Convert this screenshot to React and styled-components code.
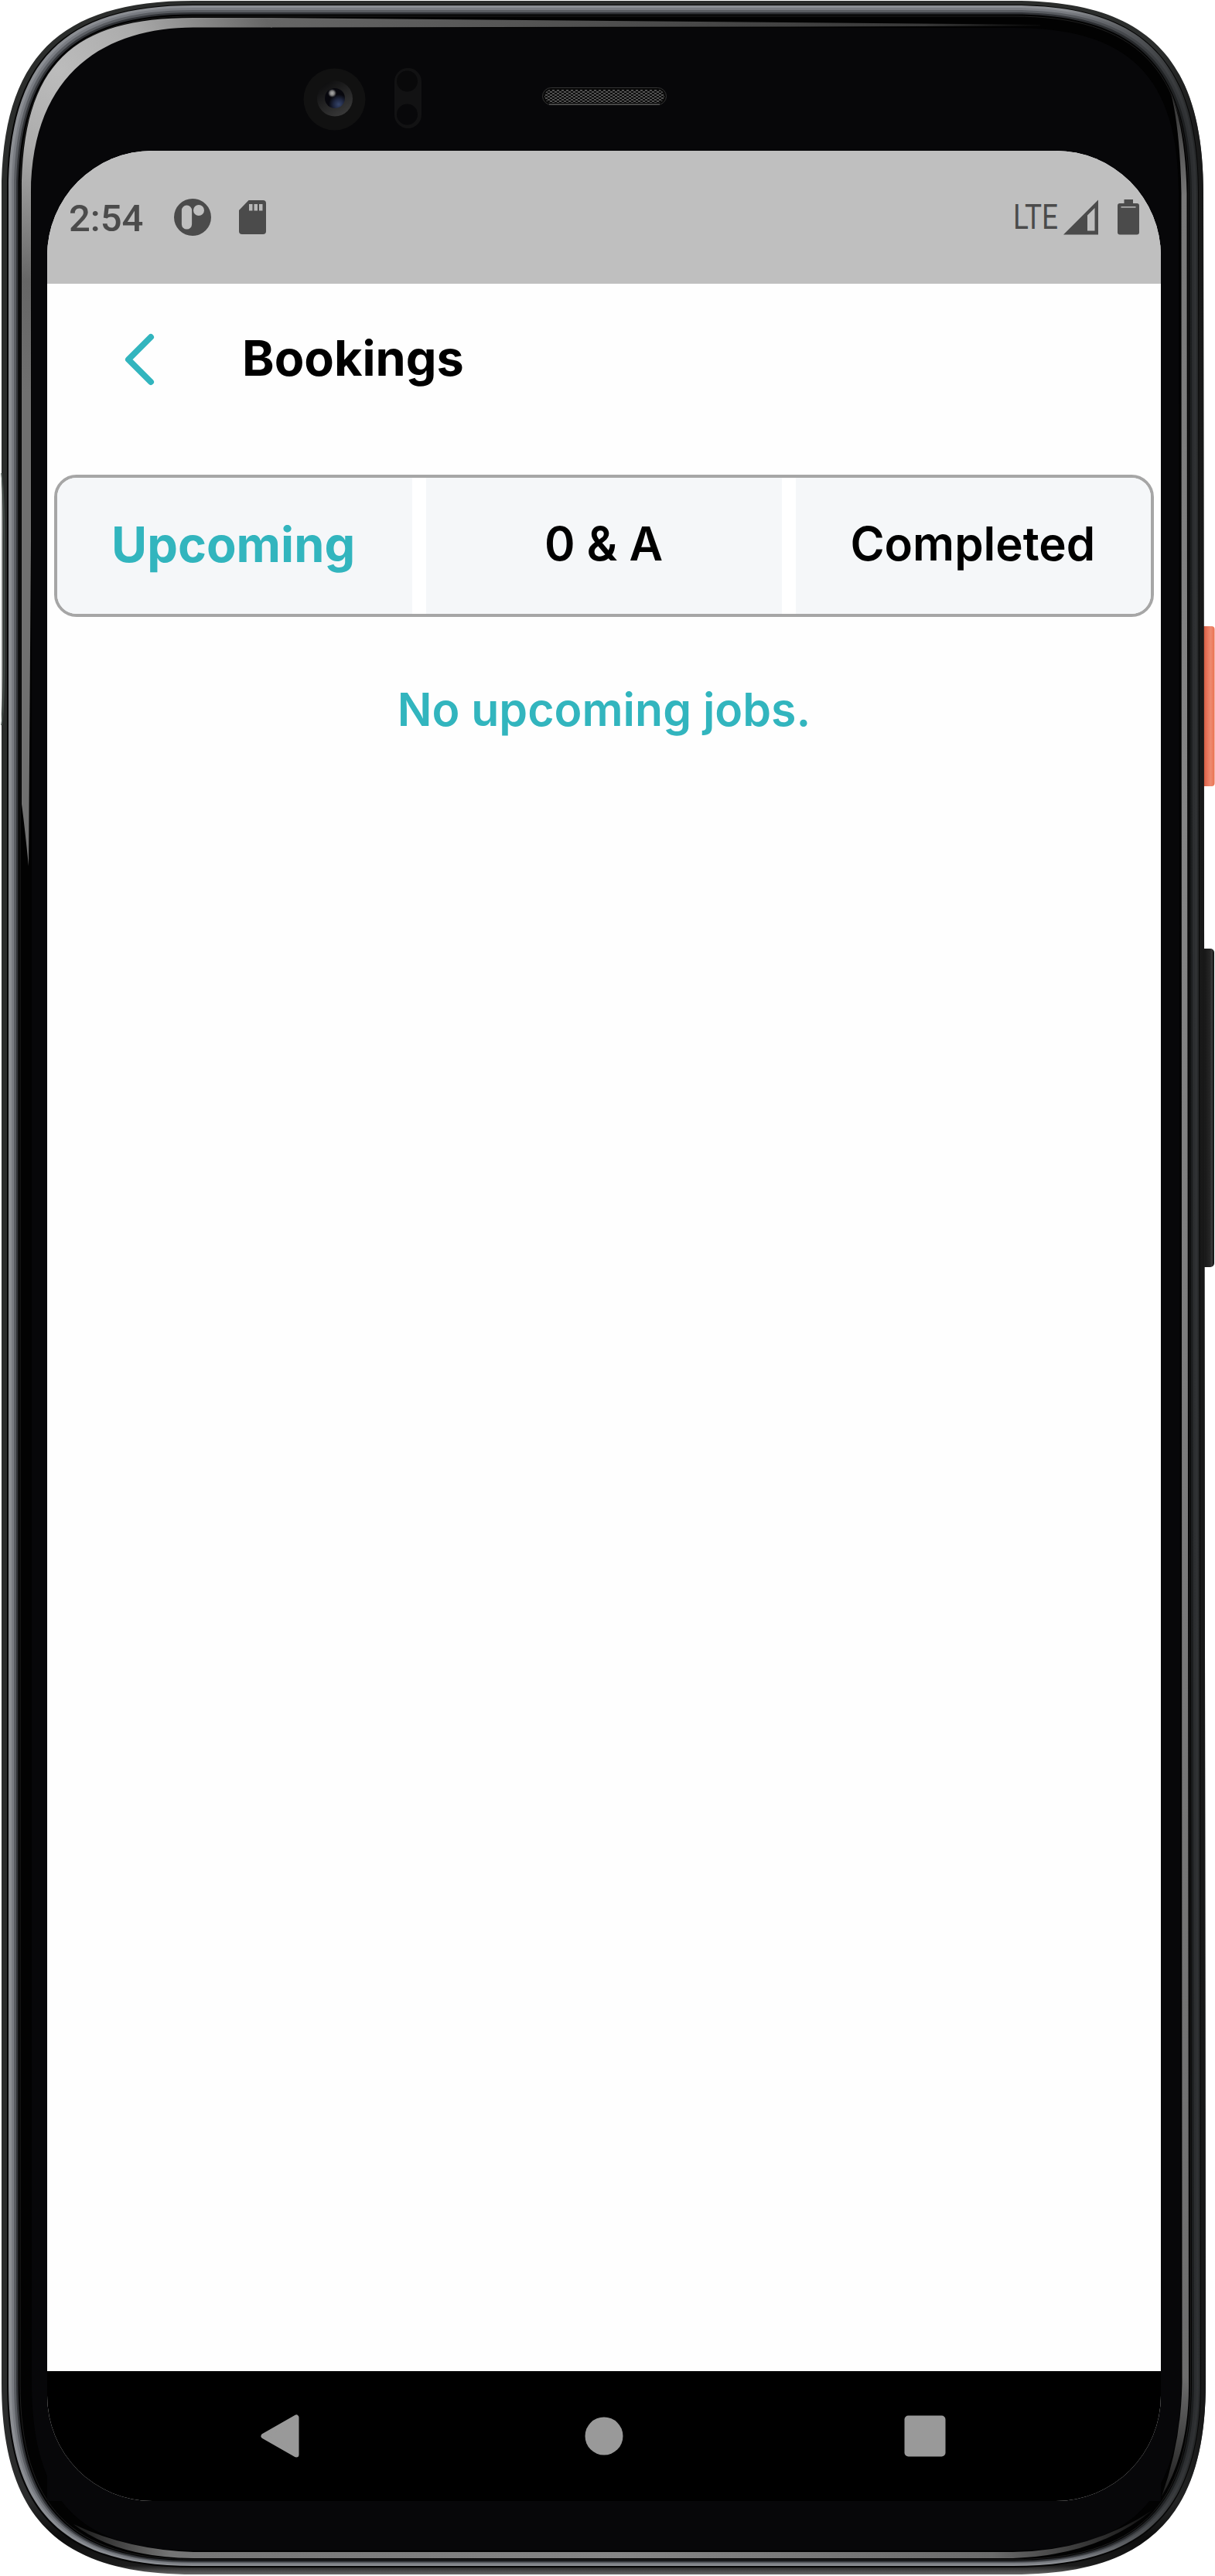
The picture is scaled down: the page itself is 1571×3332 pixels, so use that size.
import React from "react";
import styled, { createGlobalStyle, css } from "styled-components";

const GlobalStyle = createGlobalStyle`
  html, body { margin: 0; padding: 0; background: #fff; }
  *, *::before, *::after { box-sizing: border-box; }
`;

const teal = "#32b5be";
const ink = "#4b4b4b";

const Device = styled.div`
  position: relative;
  width: 1571px;
  height: 3332px;
  padding: 195px 70px 97px 61px;
  overflow: hidden;
`;

const Bezel = styled.svg`
  position: absolute;
  inset: 0;
  display: block;
`;

const Screen = styled.main`
  position: relative;
  display: flex;
  flex-direction: column;
  width: 1440px;
  height: 3040px;
  border-radius: 136px;
  background: #fefefe;
  overflow: hidden;
`;

const StatusBar = styled.header`
  display: flex;
  justify-content: space-between;
  height: 172px;
  padding: 60px 28px 60px 28px;
  background: #bfbfbf;
  color: ${ink};
  font-family: Roboto, sans-serif;
`;

const StatusGroup = styled.div`
  display: flex;
  align-items: center;
  height: 52px;
`;

const Clock = styled.time`
  width: 135px;
  font-size: 49px;
  line-height: 52px;
  font-weight: 500;
  padding-top: 4px;
`;

const Network = styled.span`
  width: 65px;
  padding-top: 1px;
  font-size: 43.5px;
  line-height: 52px;
  white-space: nowrap;
  transform: scaleX(0.85);
  transform-origin: left center;
`;

const Glyph = styled.svg`
  display: block;
  flex: none;
  margin-left: ${(p) => p.$gap || 0}px;
`;

const AppBar = styled.div`
  display: flex;
  align-items: center;
  height: 196px;
  padding-left: 96px;
`;

const BackButton = styled.button`
  display: flex;
  border: 0;
  padding: 0;
  background: none;
`;

const Title = styled.h1`
  margin: 0 0 4px 110px;
  font: 700 63px/76px Inter, sans-serif;
  color: #000;
`;

const Tabs = styled.nav`
  display: grid;
  grid-template-columns: repeat(3, 1fr);
  gap: 18px;
  height: 184px;
  margin: 51px 9px 0;
  border: 4px solid #a6a6a6;
  border-radius: 29px;
  background: #fff;
  overflow: hidden;
`;

const Tab = styled.button`
  border: 0;
  padding: 0 1px 6px 0;
  background: #f5f7f9;
  color: #000;
  font: 600 60px/72px Inter, sans-serif;
  ${(p) =>
    p.$active &&
    css`
      color: ${teal};
      font-weight: 700;
      font-size: 63px;
      padding: 0 4px 4px 0;
    `}
`;

const Empty = styled.p`
  flex: 1;
  margin: 84px 0 0;
  text-align: center;
  color: ${teal};
  font: 600 59px/72px Inter, sans-serif;
`;

const NavBar = styled.footer`
  display: flex;
  align-items: center;
  height: 168px;
  padding-left: 275px;
  background: #000;
`;

/* Closed outline of the body, inset from each side. */
const ring = (l, t, r, b) => {
  const k = 0.297;
  const cl = l + k * (250 - l);
  const ct = t + k * (250 - t);
  const cr = r - k * (r - 1310);
  const cb = b - k * (b - 3082);
  return `M${l} 250C${l} ${ct} ${cl} ${t} 250 ${t}H1310C${cr} ${t} ${r} ${ct} ${r} 250L${r + 3} 3082C${r + 3} ${cb} ${cr} ${b} 1310 ${b}H250C${cl} ${b} ${l} ${cb} ${l} 3082Z`;
};

function DeviceBezel() {
  return (
    <Bezel width="1571" height="3332" viewBox="0 0 1571 3332" aria-hidden="true">
      <defs>
        <linearGradient id="edge" x1="0" y1="0" x2="0" y2="3332" gradientUnits="userSpaceOnUse">
          <stop offset="0" stopColor="#2b2d2c" />
          <stop offset="0.97" stopColor="#2b2c2c" />
          <stop offset="0.985" stopColor="#0c0c0c" />
          <stop offset="0.996" stopColor="#1c1c1c" />
          <stop offset="1" stopColor="#777" />
        </linearGradient>
        <linearGradient id="edgeRight" x1="1500" y1="0" x2="1560" y2="0" gradientUnits="userSpaceOnUse">
          <stop offset="0" stopColor="#161616" stopOpacity="0" />
          <stop offset="1" stopColor="#161616" />
        </linearGradient>
        {[
          ["m1", "#8b8e93", "#262829"],
          ["m2", "#797c82", "#303234"],
          ["m3", "#595c61", "#2c2e30"],
          ["m4", "#303236", "#1c1e1f"],
        ].map(([id, a, b]) => (
          <linearGradient key={id} id={id} x1="1380" y1="0" x2="1540" y2="0" gradientUnits="userSpaceOnUse">
            <stop offset="0" stopColor={a} />
            <stop offset="1" stopColor={b} />
          </linearGradient>
        ))}
        <radialGradient id="glare" cx="75" cy="90" r="420" gradientUnits="userSpaceOnUse">
          <stop offset="0" stopColor="#bcbcbc" />
          <stop offset="0.25" stopColor="#acacac" />
          <stop offset="0.66" stopColor="#666" />
          <stop offset="1" stopColor="#707070" />
        </radialGradient>
        <linearGradient id="topGlare" x1="350" y1="0" x2="1345" y2="0" gradientUnits="userSpaceOnUse">
          <stop offset="0" stopColor="#666" />
          <stop offset="0.5" stopColor="#4b4b4b" />
          <stop offset="0.85" stopColor="#383838" />
          <stop offset="1" stopColor="#080808" />
        </linearGradient>
        <linearGradient id="bottomGlare" x1="110" y1="0" x2="1490" y2="0" gradientUnits="userSpaceOnUse">
          <stop offset="0" stopColor="#222" />
          <stop offset="0.08" stopColor="#757575" />
          <stop offset="0.5" stopColor="#858585" />
          <stop offset="0.85" stopColor="#6b6b6b" />
          <stop offset="1" stopColor="#111" />
        </linearGradient>
        <linearGradient id="rightGlare" x1="0" y1="130" x2="0" y2="3230" gradientUnits="userSpaceOnUse">
          <stop offset="0" stopColor="#333" />
          <stop offset="0.04" stopColor="#787878" />
          <stop offset="0.3" stopColor="#858585" />
          <stop offset="0.95" stopColor="#6d6d6d" />
          <stop offset="1" stopColor="#1c1c1c" />
        </linearGradient>
        <linearGradient id="power" x1="1557" y1="0" x2="1571" y2="0" gradientUnits="userSpaceOnUse">
          <stop offset="0" stopColor="#d65f46" />
          <stop offset="0.3" stopColor="#e8765c" />
          <stop offset="0.6" stopColor="#ee8a70" />
          <stop offset="0.85" stopColor="#ec7a5a" />
          <stop offset="1" stopColor="#e8694a" />
        </linearGradient>
        <linearGradient id="volume" x1="1557" y1="0" x2="1570" y2="0" gradientUnits="userSpaceOnUse">
          <stop offset="0" stopColor="#161616" />
          <stop offset="0.6" stopColor="#262626" />
          <stop offset="0.75" stopColor="#3a3a3a" />
          <stop offset="1" stopColor="#0c0c0c" />
        </linearGradient>
        <linearGradient id="lensRing" x1="415" y1="106" x2="445" y2="150" gradientUnits="userSpaceOnUse">
          <stop offset="0" stopColor="#0b0b0c" />
          <stop offset="1" stopColor="#3a3a3a" />
        </linearGradient>
        <radialGradient id="lens" cx="438" cy="135" r="13" gradientUnits="userSpaceOnUse">
          <stop offset="0" stopColor="#36456a" />
          <stop offset="0.5" stopColor="#202842" />
          <stop offset="1" stopColor="#07070d" />
        </radialGradient>
        <radialGradient id="spark">
          <stop offset="0" stopColor="#aaa" />
          <stop offset="0.5" stopColor="#808080" />
          <stop offset="1" stopColor="#777" stopOpacity="0" />
        </radialGradient>
        <pattern id="mesh" width="6" height="4" patternUnits="userSpaceOnUse">
          <rect width="6" height="4" fill="#0c0c0c" />
          <path d="M0 1h3M3 3h3" stroke="#666" strokeWidth="1.3" />
        </pattern>
      </defs>

      <rect x="1552" y="810" width="18.500" height="207" rx="4" fill="url(#power)" />
      <rect x="1550" y="1227" width="20" height="412" rx="5" fill="url(#volume)" />

      <path d={ring(2, 1, 1556, 3330)} fill="url(#edge)" />
      <path d={ring(2, 1, 1556, 3330)} fill="url(#edgeRight)" />
      <path d={ring(9, 6, 1550, 3321)} fill="#060606" />
      <path d={ring(11, 7, 1549, 3319)} fill="url(#m1)" />
      <path d={ring(15, 10, 1547, 3317)} fill="url(#m2)" />
      <path d={ring(18, 13, 1544, 3315)} fill="url(#m3)" />
      <path d={ring(21, 16, 1541, 3314)} fill="url(#m4)" />
      <path d={ring(23.5, 18.5, 1538, 3312)} fill="#020202" />
      <path d={ring(26, 21, 1536.5, 3310.5)} fill="none" stroke="#1e1e1e" strokeWidth="1" />
      <path d={ring(41, 36, 1524, 3299)} fill="#070709" />

      <path
        d="M28 1040V250C28 82 95 23 250 23H352V35.500H250C140 36 41 90 40 250V700L37 1120Q32 1070 28 1040Z"
        fill="url(#glare)"
      />
      <path d="M350 23L1345 32V33.500L1000 34.500L350 35.500Z" fill="url(#topGlare)" />
      <path
        d="M1514 120Q1533 170 1534.500 250L1537 3082Q1538 3170 1502 3229Q1527 3160 1528.500 3082L1527.500 250Q1526 170 1514 120Z"
        fill="url(#rightGlare)"
      />
      <path
        d="M95 3265Q150 3308 250 3309H1310Q1420 3305 1490 3247Q1410 3300 1310 3301H250Q165 3298 95 3265Z"
        fill="url(#bottomGlare)"
      />
      <path d="M0 610Q4 618 3.500 700V860Q3.500 925 0 940Z" fill="#e7ebe9" opacity="0.6" />
      <path d="M2 612Q5.500 640 5.500 700V860Q5 920 2 938" fill="none" stroke="#454e4a" strokeWidth="1.500" />
      <rect x="61" y="195" width="1440" height="3040" fill="#070709" />

      <circle cx="432.500" cy="128.500" r="40" fill="#111111" />
      <circle cx="433" cy="127.500" r="23" fill="url(#lensRing)" />
      <circle cx="433" cy="127" r="13" fill="url(#lens)" />
      <circle cx="429.500" cy="120.500" r="5.500" fill="url(#spark)" />
      <rect x="510" y="88" width="35" height="78" rx="17.500" fill="#121213" />
      <circle cx="526.500" cy="105" r="13.500" fill="#09090a" />
      <circle cx="526.500" cy="148" r="13.500" fill="#08080a" />
      <rect x="701.500" y="113.500" width="160" height="22" rx="11" fill="#080808" stroke="#333" />
      <rect x="704" y="116" width="155" height="17" rx="8.500" fill="url(#mesh)" />
      <path d="M710 135H853" stroke="#555" strokeWidth="1.500" />
    </Bezel>
  );
}

export default function App() {
  return (
    <>
      <GlobalStyle />
      <Device>
        <DeviceBezel />
        <Screen>
          <StatusBar>
            <StatusGroup>
              <Clock>2:54</Clock>
              <Glyph width="50" height="50" viewBox="0 0 50 50">
                <path
                  fill={ink}
                  fillRule="evenodd"
                  d="M25 1a24 24 0 1 0 0 48a24 24 0 1 0 0-48ZM17.500 9.500a6.600 6.600 0 0 1 6.600 6.600V34a6.600 6.600 0 0 1-13.200 0V16.100a6.600 6.600 0 0 1 6.600-6.600ZM33 9a7 7 0 1 1 0 14a7 7 0 1 1 0-14Z"
                />
              </Glyph>
              <Glyph $gap={34} width="36" height="46" viewBox="0 0 36 46">
                <path fill={ink} d="M13.500 1H32a4 4 0 0 1 4 4V41a4 4 0 0 1-4 4H5a4 4 0 0 1-4-4V14Z" />
                <path fill="#b8b8b8" d="M14 6h4.500v8.500H14zM20.500 6H25v8.500h-4.500zM27 6h4.500v8.500H27z" />
              </Glyph>
            </StatusGroup>
            <StatusGroup>
              <Network>LTE</Network>
              <Glyph width="45" height="46" viewBox="0 0 45 46">
                <path
                  fill={ink}
                  fillRule="evenodd"
                  d="M0 45.500L45 .5V45.500ZM31 20.500V40.500H40.500V11Z"
                />
              </Glyph>
              <Glyph $gap={25} width="28" height="46" viewBox="0 0 28 46">
                <path
                  fill={ink}
                  d="M8.500 0H20v5H25a3 3 0 0 1 3 3V42.500a3 3 0 0 1-3 3H3a3 3 0 0 1-3-3V8a3 3 0 0 1 3-3H8.500Z"
                />
                <path fill="#aaa" d="M4.500 9h19v1.800h-19z" />
              </Glyph>
            </StatusGroup>
          </StatusBar>

          <AppBar>
            <BackButton aria-label="Back">
              <Glyph width="46" height="68" viewBox="0 0 46 68">
                <path
                  d="M38 5L9 34L38 63"
                  fill="none"
                  stroke={teal}
                  strokeWidth="8"
                  strokeLinecap="round"
                  strokeLinejoin="round"
                />
              </Glyph>
            </BackButton>
            <Title>Bookings</Title>
          </AppBar>

          <Tabs>
            <Tab $active>Upcoming</Tab>
            <Tab>0 &amp; A</Tab>
            <Tab>Completed</Tab>
          </Tabs>

          <Empty>No upcoming jobs.</Empty>

          <NavBar>
            <Glyph width="51" height="58" viewBox="0 0 51 58">
              <path
                d="M47 5V53L5 29Z"
                fill="#999"
                stroke="#999"
                strokeWidth="7"
                strokeLinejoin="round"
              />
            </Glyph>
            <Glyph $gap={368.5} width="50" height="50" viewBox="0 0 50 50">
              <circle cx="25" cy="25" r="24.500" fill="#999" />
            </Glyph>
            <Glyph $gap={363.5} width="54" height="54" viewBox="0 0 54 54">
              <rect x=".5" y=".5" width="53" height="53" rx="5" fill="#999" />
            </Glyph>
          </NavBar>
        </Screen>
      </Device>
    </>
  );
}
